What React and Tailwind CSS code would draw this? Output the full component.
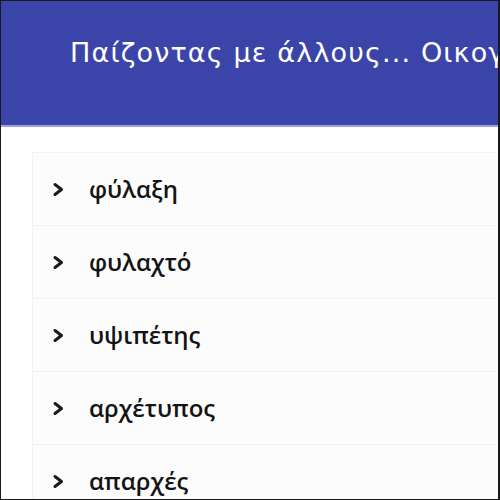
const items = ["φύλαξη", "φυλαχτό", "υψιπέτης", "αρχέτυπος", "απαρχές", "αρχαίος"];

function Chevron() {
  return (
    <svg width="13" height="15" viewBox="0 0 13 15" className="shrink-0">
      <path d="M3 2.5 L9.5 7.5 L3 12.5" fill="none" stroke="#1a1a1a" strokeWidth="3" strokeLinecap="round" strokeLinejoin="round" />
    </svg>
  );
}

export default function App() {
  return (
    <div className="w-[500px] h-[500px] overflow-hidden bg-white border-t border-l border-b border-r-2 border-[#1a1a1a]">
      <header className="h-[126px] bg-[#3b44a8] border-b-2 border-[#9aa0e0] pl-[69px] pt-[32px] overflow-hidden">
        <h1 className="text-white text-[27px] leading-[40px] whitespace-nowrap tracking-[1.15px] font-['DejaVu_Sans',sans-serif]">
          Παίζοντας με άλλους... Οικογένεια και φίλοι
        </h1>
      </header>
      <ul className="mt-[25px] ml-[31px] border-t border-[#f2f2f2]">
        {items.map((item) => (
          <li key={item} className="h-[73px] flex items-center gap-[24px] pl-[19px] bg-[#fcfcfc] border-b border-l border-[#f2f2f2]">
            <Chevron />
            <span className="text-[24px] font-semibold text-[#141414] font-['Open_Sans',sans-serif]">{item}</span>
          </li>
        ))}
      </ul>
    </div>
  );
}
